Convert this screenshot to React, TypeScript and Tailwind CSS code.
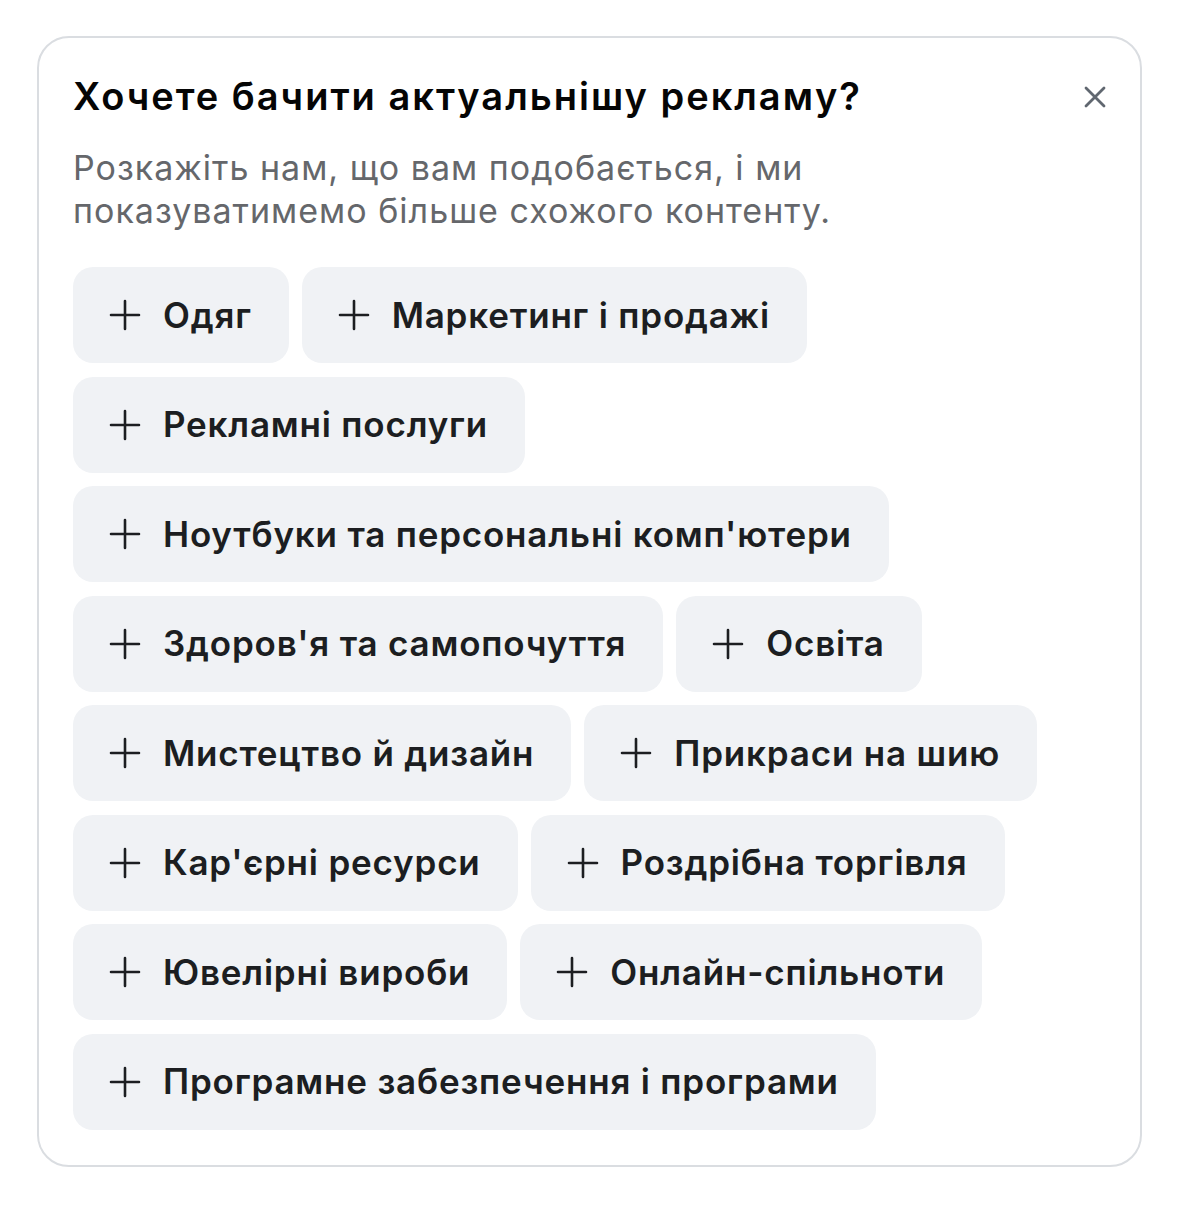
import React from "react";

const rows: string[][] = [
  ["Одяг", "Маркетинг і продажі"],
  ["Рекламні послуги"],
  ["Ноутбуки та персональні комп'ютери"],
  ["Здоров'я та самопочуття", "Освіта"],
  ["Мистецтво й дизайн", "Прикраси на шию"],
  ["Кар'єрні ресурси", "Роздрібна торгівля"],
  ["Ювелірні вироби", "Онлайн-спільноти"],
  ["Програмне забезпечення і програми"],
];

function Plus() {
  return (
    <svg width="32" height="32" viewBox="0 0 32 32" className="shrink-0">
      <path d="M16 2 V30 M2 16 H30" stroke="#1c1e21" strokeWidth="2.6" strokeLinecap="round" />
    </svg>
  );
}

function Chip({ label }: { label: string }) {
  return (
    <div className="flex h-[96px] items-center gap-[22px] rounded-[20px] bg-[#f0f2f5] pl-[36px] pr-[37px]">
      <Plus />
      <span className="text-[35px] font-semibold tracking-[0.8px] text-[#1c1e21] whitespace-nowrap">{label}</span>
    </div>
  );
}

export default function App() {
  return (
    <div className="min-h-[1210px] w-[1179px] bg-white pt-[36px] pl-[37px]" style={{ fontFamily: "Inter, 'Noto Sans', sans-serif" }}>
      <div className="w-[1105px] rounded-[32px] border-2 border-[#dadde1] px-[34px] pt-[33px] pb-[35px]">
        <div className="flex items-start justify-between">
          <h1 className="text-[38px] leading-[50px] font-semibold text-[#050505] tracking-[2px]">Хочете бачити актуальнішу рекламу?</h1>
          <svg width="22" height="22" viewBox="0 0 22 22" className="mt-[15px] mr-0">
            <path d="M2 2 L20 20 M20 2 L2 20" stroke="#606770" strokeWidth="2.8" strokeLinecap="round" />
          </svg>
        </div>
        <p className="mt-[25px] text-[34px] leading-[43px] text-[#65676b] tracking-[1px]">
          Розкажіть нам, що вам подобається, і ми
          <br />
          показуватимемо більше схожого контенту.
        </p>
        <div className="mt-[35px] flex flex-col gap-[13.5px]">
          {rows.map((r, i) => (
            <div key={i} className="flex gap-[13px]">
              {r.map((l) => (
                <Chip key={l} label={l} />
              ))}
            </div>
          ))}
        </div>
      </div>
    </div>
  );
}
